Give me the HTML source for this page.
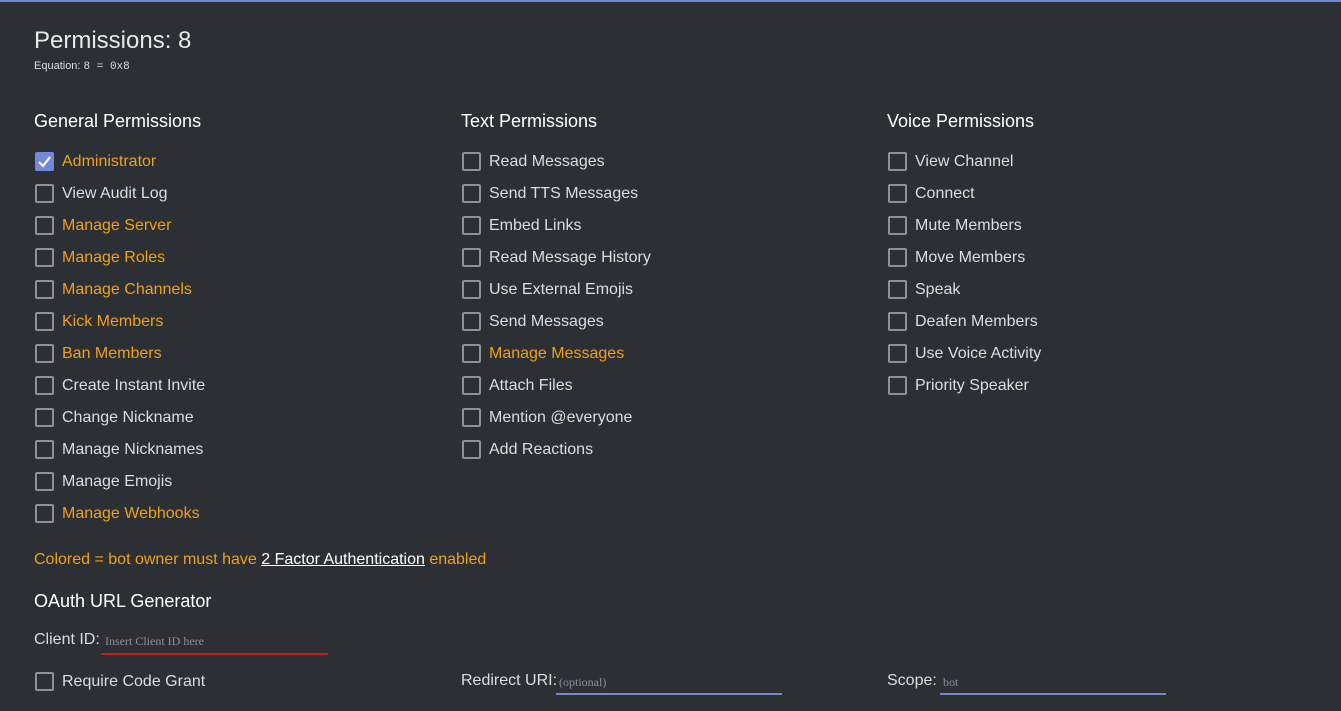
<!DOCTYPE html>
<html><head><meta charset="utf-8"><style>
body{margin:0;width:1341px;height:711px;background:#2c2f33;font-family:"Liberation Sans",sans-serif;color:#dcddde;position:relative;overflow:hidden}
.a{position:absolute;white-space:nowrap}
.cb{position:absolute;width:15px;height:15px;border:2px solid #8e9297;border-radius:2px}
.l{position:absolute;font-size:16px;line-height:18px}
.o{color:#f0a01c}
h2{position:absolute;margin:0;font-size:18px;font-weight:normal;color:#fff}
</style></head><body>
<div class="a" style="left:0;top:0;width:1341px;height:2px;background:#7289da"></div>
<div class="a" style="left:34px;top:27px;font-size:24px;color:#e8e8e8">Permissions: 8</div>
<div class="a" style="left:34px;top:60px;font-size:11px">Equation: <span style="font-family:'Liberation Mono',monospace">8 = 0x8</span></div>
<h2 style="left:34px;top:111px">General Permissions</h2>
<h2 style="left:461px;top:111px">Text Permissions</h2>
<h2 style="left:887px;top:111px">Voice Permissions</h2>
<div id="c"></div>
<div class="a o" style="left:34px;top:551px;font-size:16px">Colored = bot owner must have <span style="color:#fff;text-decoration:underline">2 Factor Authentication</span> enabled</div>
<h2 style="left:34px;top:591px">OAuth URL Generator</h2>
<div class="a" style="left:34px;top:631px;font-size:16px">Client ID:</div>
<div class="a" style="left:105px;top:634px;font-size:12px;color:#8e9297;font-family:'Liberation Serif',serif">Insert Client ID here</div>
<div class="a" style="left:101px;top:653px;width:227px;height:2px;background:#e01010"></div>
<div class="cb" style="left:35px;top:672px"></div>
<div class="l" style="left:62px;top:673px">Require Code Grant</div>
<div class="a" style="left:461px;top:672px;font-size:16px">Redirect URI:</div>
<div class="a" style="left:559px;top:675px;font-size:12px;color:#8e9297;font-family:'Liberation Serif',serif">(optional)</div>
<div class="a" style="left:556px;top:693px;width:226px;height:2px;background:#7289da"></div>
<div class="a" style="left:887px;top:672px;font-size:16px">Scope:</div>
<div class="a" style="left:943px;top:675px;font-size:12px;color:#8e9297;font-family:'Liberation Serif',serif">bot</div>
<div class="a" style="left:940px;top:693px;width:226px;height:2px;background:#7289da"></div>
<script>
var cols=[[35,[["Administrator",1],["View Audit Log",0],["Manage Server",1],["Manage Roles",1],["Manage Channels",1],["Kick Members",1],["Ban Members",1],["Create Instant Invite",0],["Change Nickname",0],["Manage Nicknames",0],["Manage Emojis",0],["Manage Webhooks",1]]],
[462,[["Read Messages",0],["Send TTS Messages",0],["Embed Links",0],["Read Message History",0],["Use External Emojis",0],["Send Messages",0],["Manage Messages",1],["Attach Files",0],["Mention @everyone",0],["Add Reactions",0]]],
[888,[["View Channel",0],["Connect",0],["Mute Members",0],["Move Members",0],["Speak",0],["Deafen Members",0],["Use Voice Activity",0],["Priority Speaker",0]]]];
var h="";
cols.forEach(function(c){c[1].forEach(function(r,i){var y=152+i*32;
if(c[0]==35&&i==0)h+='<div class="cb" style="left:35px;top:'+y+'px;background:#7289da;border-color:#7289da"><svg width="15" height="15" style="position:absolute;left:0;top:0"><path d="M2 8l4 4 7-9" stroke="#fff" stroke-width="2.2" fill="none"/></svg></div>';
else h+='<div class="cb" style="left:'+c[0]+'px;top:'+y+'px"></div>';
h+='<div class="l'+(r[1]?' o':'')+'" style="left:'+(c[0]+27)+'px;top:'+(y+1)+'px">'+r[0]+'</div>';});});
document.getElementById("c").innerHTML=h;
</script>
</body></html>
